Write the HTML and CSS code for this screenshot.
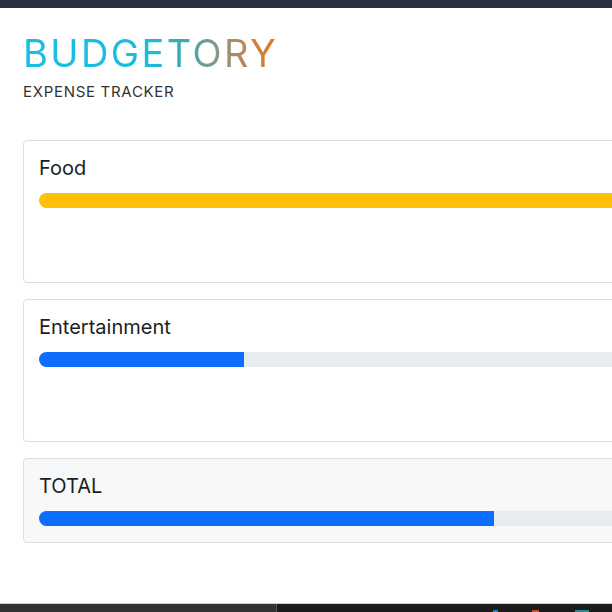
FILE: index.html
```html
<!DOCTYPE html>
<html lang="en">
<head>
<meta charset="utf-8">
<title>Budgetory</title>
<link rel="stylesheet" href="styles.css">
</head>
<body>
<div class="topbar"></div>
<main class="page">
  <header class="brand">
    <h1 class="logo">BUDGETORY</h1>
    <p class="tagline">EXPENSE TRACKER</p>
  </header>
  <section class="cards">
    <div class="card">
      <h2 class="card-title">Food</h2>
      <div class="progress"><div class="fill fill-warning" style="width:100%"></div></div>
      <div class="card-extra"></div>
    </div>
    <div class="card">
      <h2 class="card-title">Entertainment</h2>
      <div class="progress"><div class="fill fill-primary" style="width:29%"></div></div>
      <div class="card-extra"></div>
    </div>
    <div class="card card-total">
      <h2 class="card-title">TOTAL</h2>
      <div class="progress"><div class="fill fill-primary" style="width:64.3%"></div></div>
    </div>
  </section>
</main>
<footer class="taskbar">
  <div class="task-left"></div>
  <div class="task-right">
    <span class="tray tray-blue"></span>
    <span class="tray tray-red"></span>
    <span class="tray tray-teal"></span>
  </div>
</footer>
</body>
</html>
```

FILE: styles.css
```css
html, body {
  margin: 0;
  padding: 0;
}
body {
  width: 612px;
  height: 612px;
  overflow: hidden;
  background: #ffffff;
  font-family: "Inter", "Open Sans", sans-serif;
  color: #212529;
  display: flex;
  flex-direction: column;
}
.topbar {
  height: 8px;
  background: #2d3040;
  flex: none;
}
.page {
  flex: 1;
  padding: 23px 0 0 23px;
}
.brand {
  display: flex;
  flex-direction: column;
}
.logo {
  margin: 0;
  font-size: 38px;
  line-height: 44px;
  font-weight: 400;
  letter-spacing: 2.4px;
  align-self: flex-start;
  background: linear-gradient(90deg, #17bfe3 0%, #1bbbdc 50%, #3aa9b4 62%, #7e9b8a 75%, #b9875a 86%, #ea7519 100%);
  -webkit-background-clip: text;
  background-clip: text;
  color: transparent;
}
.tagline {
  margin: 7px 0 0 0;
  font-size: 15px;
  line-height: 20px;
  font-weight: 400;
  letter-spacing: 0.7px;
  color: #333333;
}
.cards {
  margin-top: 38px;
  display: flex;
  flex-direction: column;
  gap: 16px;
  width: 740px;
}
.card {
  border: 1px solid #dcdee0;
  border-radius: 4px;
  padding: 14px 15px 16px 15px;
  background: #ffffff;
}
.card-total {
  background: #f7f8f9;
}
.card-title {
  margin: 0 0 12px 0;
  font-size: 20px;
  line-height: 26px;
  font-weight: 400;
  color: #1e1e1e;
}
.progress {
  height: 15px;
  border-radius: 8px;
  background: #e9ecef;
  overflow: hidden;
  display: flex;
}
.fill {
  height: 100%;
}
.fill-warning {
  background: #ffc107;
}
.fill-primary {
  background: #0d6efd;
}
.card-extra {
  height: 58px;
}
.taskbar {
  flex: none;
  height: 8px;
  border-top: 1px solid #cfcfcf;
  display: flex;
}
.task-left {
  width: 276px;
  background: #323232;
  border-right: 1px solid #555555;
}
.task-right {
  flex: 1;
  background: #1b1b1b;
  position: relative;
}
.tray {
  position: absolute;
  bottom: 0;
  height: 2px;
}
.tray-blue {
  left: 216px;
  width: 5px;
  background: #1f7ad8;
}
.tray-red {
  left: 255px;
  width: 7px;
  background: #d2452f;
}
.tray-teal {
  left: 298px;
  width: 14px;
  background: #2a8a98;
}
```
